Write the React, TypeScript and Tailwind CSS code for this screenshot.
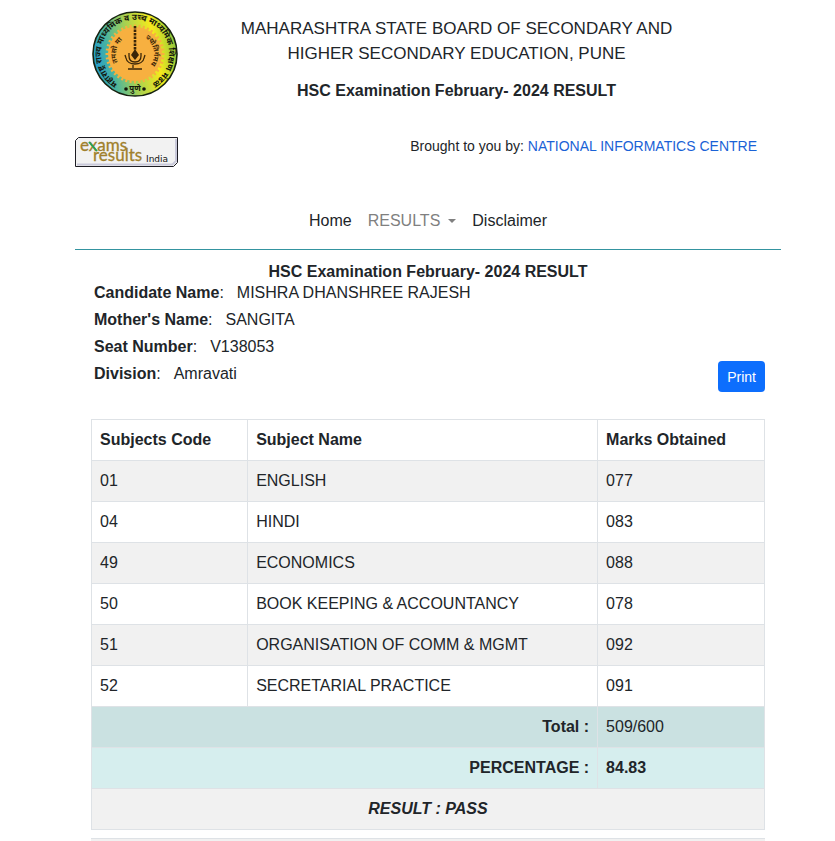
import React from "react";

const subjects = [
  { code: "01", name: "ENGLISH", marks: "077" },
  { code: "04", name: "HINDI", marks: "083" },
  { code: "49", name: "ECONOMICS", marks: "088" },
  { code: "50", name: "BOOK KEEPING & ACCOUNTANCY", marks: "078" },
  { code: "51", name: "ORGANISATION OF COMM & MGMT", marks: "092" },
  { code: "52", name: "SECRETARIAL PRACTICE", marks: "091" },
];

const candidate = [
  { label: "Candidate Name", value: "MISHRA DHANSHREE RAJESH" },
  { label: "Mother's Name", value: "SANGITA" },
  { label: "Seat Number", value: "V138053" },
  { label: "Division", value: "Amravati" },
];

const rays = Array.from({ length: 40 }, (_, i) => i * 9);

function BoardSeal() {
  return (
    <svg className="size-[88px] shrink-0" viewBox="0 0 88 88" role="img" aria-label="Maharashtra State Board seal">
      <defs>
        <linearGradient id="ring" x1="0" y1="0.6" x2="1" y2="0.4">
          <stop offset="0" stopColor="#1f9ad2" />
          <stop offset="0.2" stopColor="#48b3a0" />
          <stop offset="0.45" stopColor="#a5d052" />
          <stop offset="0.75" stopColor="#f6ea1c" />
          <stop offset="1" stopColor="#8cc63f" />
        </linearGradient>
        <path id="outerArc" d="M 31.800 75.700 A 34 34 0 1 1 56.200 75.700" />
        <path id="leftArc" d="M 34 59.900 A 18.500 18.500 0 0 1 41 25.700" />
        <path id="rightArc" d="M 47 25.700 A 18.500 18.500 0 0 1 54 59.900" />
      </defs>
      <circle cx="44" cy="44" r="42" fill="url(#ring)" stroke="#16220f" strokeWidth="1.600" />
      <circle cx="44" cy="44" r="27" fill="#f7b040" />
      {rays.map((angle) => (
        <path key={angle} d="M44 14.500v4" stroke="#f7b040" strokeWidth="2" transform={`rotate(${angle} 44 44)`} />
      ))}
      <g fill="#14160c" fontFamily="'Noto Sans Devanagari', 'Noto Sans', sans-serif" fontWeight="700">
        <text fontSize="8.400">
          <textPath href="#outerArc" startOffset="50%" textAnchor="middle">
            महाराष्ट्र राज्य माध्यमिक व उच्च माध्यमिक शिक्षण मंडळ
          </textPath>
        </text>
        <g fontSize="7" fill="#3b2608">
          <text>
            <textPath href="#leftArc" startOffset="50%" textAnchor="middle">तमसो मा</textPath>
          </text>
          <text>
            <textPath href="#rightArc" startOffset="50%" textAnchor="middle">ज्योतिर्गमय</textPath>
          </text>
        </g>
        <text x="44" y="81" fontSize="8" textAnchor="middle">पुणे</text>
        <circle cx="35" cy="79" r="1.800" />
        <circle cx="53" cy="79" r="1.800" />
      </g>
      <g fill="none" stroke="#3b2608" strokeWidth="1.300">
        <path d="M44 16v24" strokeDasharray="2.500 1" strokeWidth="2.600" />
        <path d="M35 48c1 8 17 8 18 0M38 46c0 5 3 6 6 6s6-1 6-6M41 54h6M42 55v3M37 59h14" />
        <path d="M35 48l-1-3M53 48l1-3M38 46v-3M50 46v-3" />
      </g>
      <path d="M40 45l4-6 4 6-4 5z" fill="#3b2608" />
    </svg>
  );
}

function ExamsBadge() {
  return (
    <svg className="block h-[30px] w-[103px]" viewBox="0 0 103 30" role="img" aria-label="exams results India">
      <path d="M3.500 .5H102.500V25.500L98.500 29.500H.5V3.500z" fill="#f2f2f2" stroke="#1d1d24" />
      <path d="M2 27.500H97.500L101 24V2" fill="none" stroke="#c9c9da" strokeWidth="2" />
      <g fontFamily="Lato, sans-serif" fill="#a0802c" stroke="#a0802c" strokeWidth=".3">
        <text x="5" y="14" fontSize="17">exams</text>
        <text x="18" y="24" fontSize="17">results</text>
      </g>
      <path d="M14 5l8 9" stroke="#1fa35a" strokeWidth="1.800" />
      <text x="71" y="25" fontSize="9" fontFamily="'DejaVu Sans', sans-serif" fill="#111">India</text>
    </svg>
  );
}

export default function App() {
  return (
    <div className="bg-white pl-[75px] pr-[54px] font-['Liberation_Sans',Arial,sans-serif] text-base text-[#212529]">
      <header>
        <div className="flex items-start pl-4 pt-[10px]">
          <BoardSeal />
          <div className="flex-1 pr-[47px] pt-[6px] text-center">
            <p className="text-[17px] leading-[25px]">
              MAHARASHTRA STATE BOARD OF SECONDARY AND
              <br />
              HIGHER SECONDARY EDUCATION, PUNE
            </p>
            <h1 className="mt-[13px] font-bold leading-6">HSC Examination February- 2024 RESULT</h1>
          </div>
        </div>
        <div className="mt-[34px] flex items-start justify-between pr-6">
          <a href="#exams">
            <ExamsBadge />
          </a>
          <p className="text-sm leading-[18px]">
            Brought to you by:{" "}
            <a href="#nic" className="text-[#1a62d6]">NATIONAL INFORMATICS CENTRE</a>
          </p>
        </div>
        <nav className="mt-[42px] flex justify-center gap-4 pb-4 leading-6">
          <a href="#home">Home</a>
          <button type="button" className="flex items-center gap-2 text-[#808080]">
            RESULTS
            <svg className="h-1 w-2" viewBox="0 0 8 4" aria-hidden="true">
              <path d="M0 0h8L4 4z" fill="currentColor" />
            </svg>
          </button>
          <a href="#disclaimer">Disclaimer</a>
        </nav>
        <hr className="h-px border-0 bg-[#3494a0]" />
      </header>

      <main className="px-4 pt-3">
        <h2 className="text-center font-bold leading-5">HSC Examination February- 2024 RESULT</h2>
        <div className="flex items-end justify-between pl-[3px]">
          <dl className="pb-0.5">
            {candidate.map((item) => (
              <div key={item.label} className="flex h-[27px] leading-[22px]">
                <dt>
                  <b>{item.label}</b>:
                </dt>
                <dd className="ml-[13px]">{item.value}</dd>
              </div>
            ))}
          </dl>
          <button type="button" className="h-[31px] rounded bg-[#0d6efd] px-[9px] text-sm text-white">
            Print
          </button>
        </div>

        <table className="mt-[27px] w-full table-fixed border-collapse text-left leading-6 [&_td]:border [&_td]:border-[#dee2e6] [&_td]:p-2 [&_th]:border [&_th]:border-[#dee2e6] [&_th]:p-2">
          <colgroup>
            <col className="w-[23.2%]" />
            <col className="w-[52%]" />
            <col />
          </colgroup>
          <thead>
            <tr>
              <th scope="col">Subjects Code</th>
              <th scope="col">Subject Name</th>
              <th scope="col">Marks Obtained</th>
            </tr>
          </thead>
          <tbody>
            {subjects.map((subject) => (
              <tr key={subject.code} className="odd:bg-[#f1f1f1]">
                <td>{subject.code}</td>
                <td>{subject.name}</td>
                <td>{subject.marks}</td>
              </tr>
            ))}
          </tbody>
          <tfoot>
            <tr className="bg-[#cae1e1]">
              <th scope="row" colSpan={2} className="text-right">Total :</th>
              <td>509/600</td>
            </tr>
            <tr className="bg-[#d6eeee]">
              <th scope="row" colSpan={2} className="text-right">PERCENTAGE :</th>
              <td className="font-bold">84.83</td>
            </tr>
            <tr className="bg-[#f1f1f1]">
              <td colSpan={3} className="text-center font-bold italic">RESULT : PASS</td>
            </tr>
          </tfoot>
        </table>
        <div className="mt-2 h-[3px] border-t border-[#dee2e6] bg-[#f1f1f1]" />
      </main>
    </div>
  );
}
